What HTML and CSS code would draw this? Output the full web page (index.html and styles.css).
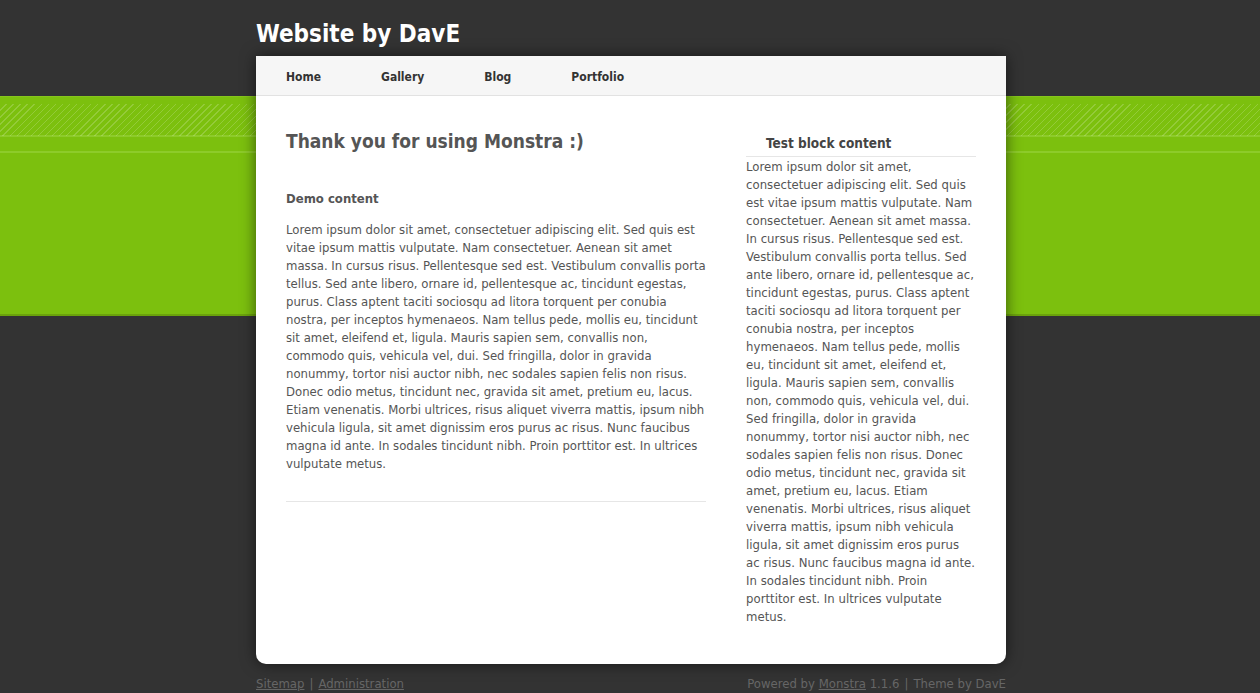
FILE: index.html
```html
<!DOCTYPE html>
<html lang="en">
<head>
    <meta charset="UTF-8">
    <title>Website by DavE</title>
    <link rel="stylesheet" href="styles.css">
</head>
<body>
    <div class="wrapper">
        <div class="head">
            <h1 class="site-title">Website by DavE</h1>
        </div>

        <div class="box">
            <ul class="nav">
                <li><a href="#">Home</a></li>
                <li><a href="#">Gallery</a></li>
                <li><a href="#">Blog</a></li>
                <li><a href="#">Portfolio</a></li>
            </ul>

            <div class="content">
                <!-- Main column -->
                <div class="main">
                    <h2 class="page-title">Thank you for using Monstra :)</h2>
                    <p class="demo"><b>Demo content</b></p>
                    <p>Lorem ipsum dolor sit amet, consectetuer adipiscing elit. Sed quis est vitae ipsum mattis vulputate. Nam consectetuer. Aenean sit amet massa. In cursus risus. Pellentesque sed est. Vestibulum convallis porta tellus. Sed ante libero, ornare id, pellentesque ac, tincidunt egestas, purus. Class aptent taciti sociosqu ad litora torquent per conubia nostra, per inceptos hymenaeos. Nam tellus pede, mollis eu, tincidunt sit amet, eleifend et, ligula. Mauris sapien sem, convallis non, commodo quis, vehicula vel, dui. Sed fringilla, dolor in gravida nonummy, tortor nisi auctor nibh, nec sodales sapien felis non risus. Donec odio metus, tincidunt nec, gravida sit amet, pretium eu, lacus. Etiam venenatis. Morbi ultrices, risus aliquet viverra mattis, ipsum nibh vehicula ligula, sit amet dignissim eros purus ac risus. Nunc faucibus magna id ante. In sodales tincidunt nibh. Proin porttitor est. In ultrices vulputate metus.</p>
                    <hr>
                </div>

                <!-- Sidebar -->
                <div class="sidebar">
                    <h3 class="block-title">Test block content</h3>
                    <p>Lorem ipsum dolor sit amet, consectetuer adipiscing elit. Sed quis est vitae ipsum mattis vulputate. Nam consectetuer. Aenean sit amet massa. In cursus risus. Pellentesque sed est. Vestibulum convallis porta tellus. Sed ante libero, ornare id, pellentesque ac, tincidunt egestas, purus. Class aptent taciti sociosqu ad litora torquent per conubia nostra, per inceptos hymenaeos. Nam tellus pede, mollis eu, tincidunt sit amet, eleifend et, ligula. Mauris sapien sem, convallis non, commodo quis, vehicula vel, dui. Sed fringilla, dolor in gravida nonummy, tortor nisi auctor nibh, nec sodales sapien felis non risus. Donec odio metus, tincidunt nec, gravida sit amet, pretium eu, lacus. Etiam venenatis. Morbi ultrices, risus aliquet viverra mattis, ipsum nibh vehicula ligula, sit amet dignissim eros purus ac risus. Nunc faucibus magna id ante. In sodales tincidunt nibh. Proin porttitor est. In ultrices vulputate metus.</p>
                </div>
            </div>
        </div>

        <div class="footer">
            <div><a href="#">Sitemap</a><span class="sep">|</span><a href="#">Administration</a></div>
            <div>Powered by <a href="#">Monstra</a> 1.1.6<span class="sep">|</span>Theme by DavE</div>
        </div>
    </div>
</body>
</html>
```

FILE: styles.css
```css
* {
    box-sizing: border-box;
    margin: 0;
    padding: 0;
}

body {
    font-family: "DejaVu Sans Condensed", Tahoma, sans-serif;
    font-size: 13px;
    color: #555;
    padding-left: 2px;
    background-color: #333;
    background-image:
        repeating-linear-gradient(135deg, transparent 0 4px, rgba(255, 255, 255, 0.18) 4px 5px),
        linear-gradient(to bottom, #333 0 96px, #86c61c 96px 97px, #7cc00e 97px 135px, #8dcb2a 135px 137px, #7cc00e 137px 151px, #8dcb2a 151px 153px, #7cc00e 153px 314px, #6ba30c 314px 316px, #333 316px);
    background-repeat: no-repeat;
    background-size: 100% 32px, 100% 100%;
    background-position: 0 104px, 0 0;
    min-height: 693px;
}

.wrapper {
    width: 750px;
    margin: 0 auto;
}

.head {
    height: 56px;
    padding-top: 19px;
}

.site-title {
    font-size: 24px;
    line-height: 30px;
    color: #fff;
}

.box {
    border-radius: 0 0 10px 10px;
    box-shadow: 0 0 15px rgba(0, 0, 0, 0.55);
}

.nav {
    list-style: none;
    display: flex;
    gap: 60px;
    height: 40px;
    align-items: center;
    padding: 2px 0 0 30px;
    background: #f6f6f6;
    border-bottom: 1px solid #e2e2e2;
}

.nav a {
    font-size: 12px;
    color: #333;
    font-weight: bold;
    text-decoration: none;
}

.content {
    display: flex;
    gap: 40px;
    padding: 31px 30px 38px;
    background: #fff;
    border-radius: 0 0 10px 10px;
    min-height: 568px;
}

.main {
    width: 420px;
}

.main p,
.sidebar p {
    line-height: 18px;
}

.sidebar p {
    letter-spacing: 0.03px;
}

.page-title {
    font-size: 19px;
    line-height: 28px;
    color: #555;
    margin-bottom: 35px;
}

.demo {
    margin-bottom: 13px;
}

.main hr {
    border: none;
    border-top: 1px solid #e6e6e6;
    margin-top: 28px;
}

.sidebar {
    width: 230px;
    padding-top: 6px;
}

.block-title {
    font-size: 13.5px;
    line-height: 20px;
    color: #444;
    padding: 0 0 3px 20px;
    border-bottom: 1px solid #e6e6e6;
    margin-bottom: 1px;
}

.footer {
    display: flex;
    justify-content: space-between;
    padding-top: 12px;
    font-size: 13px;
    color: #666;
}

.footer a {
    color: #666;
}

.footer .sep {
    margin: 0 5px;
}
```
